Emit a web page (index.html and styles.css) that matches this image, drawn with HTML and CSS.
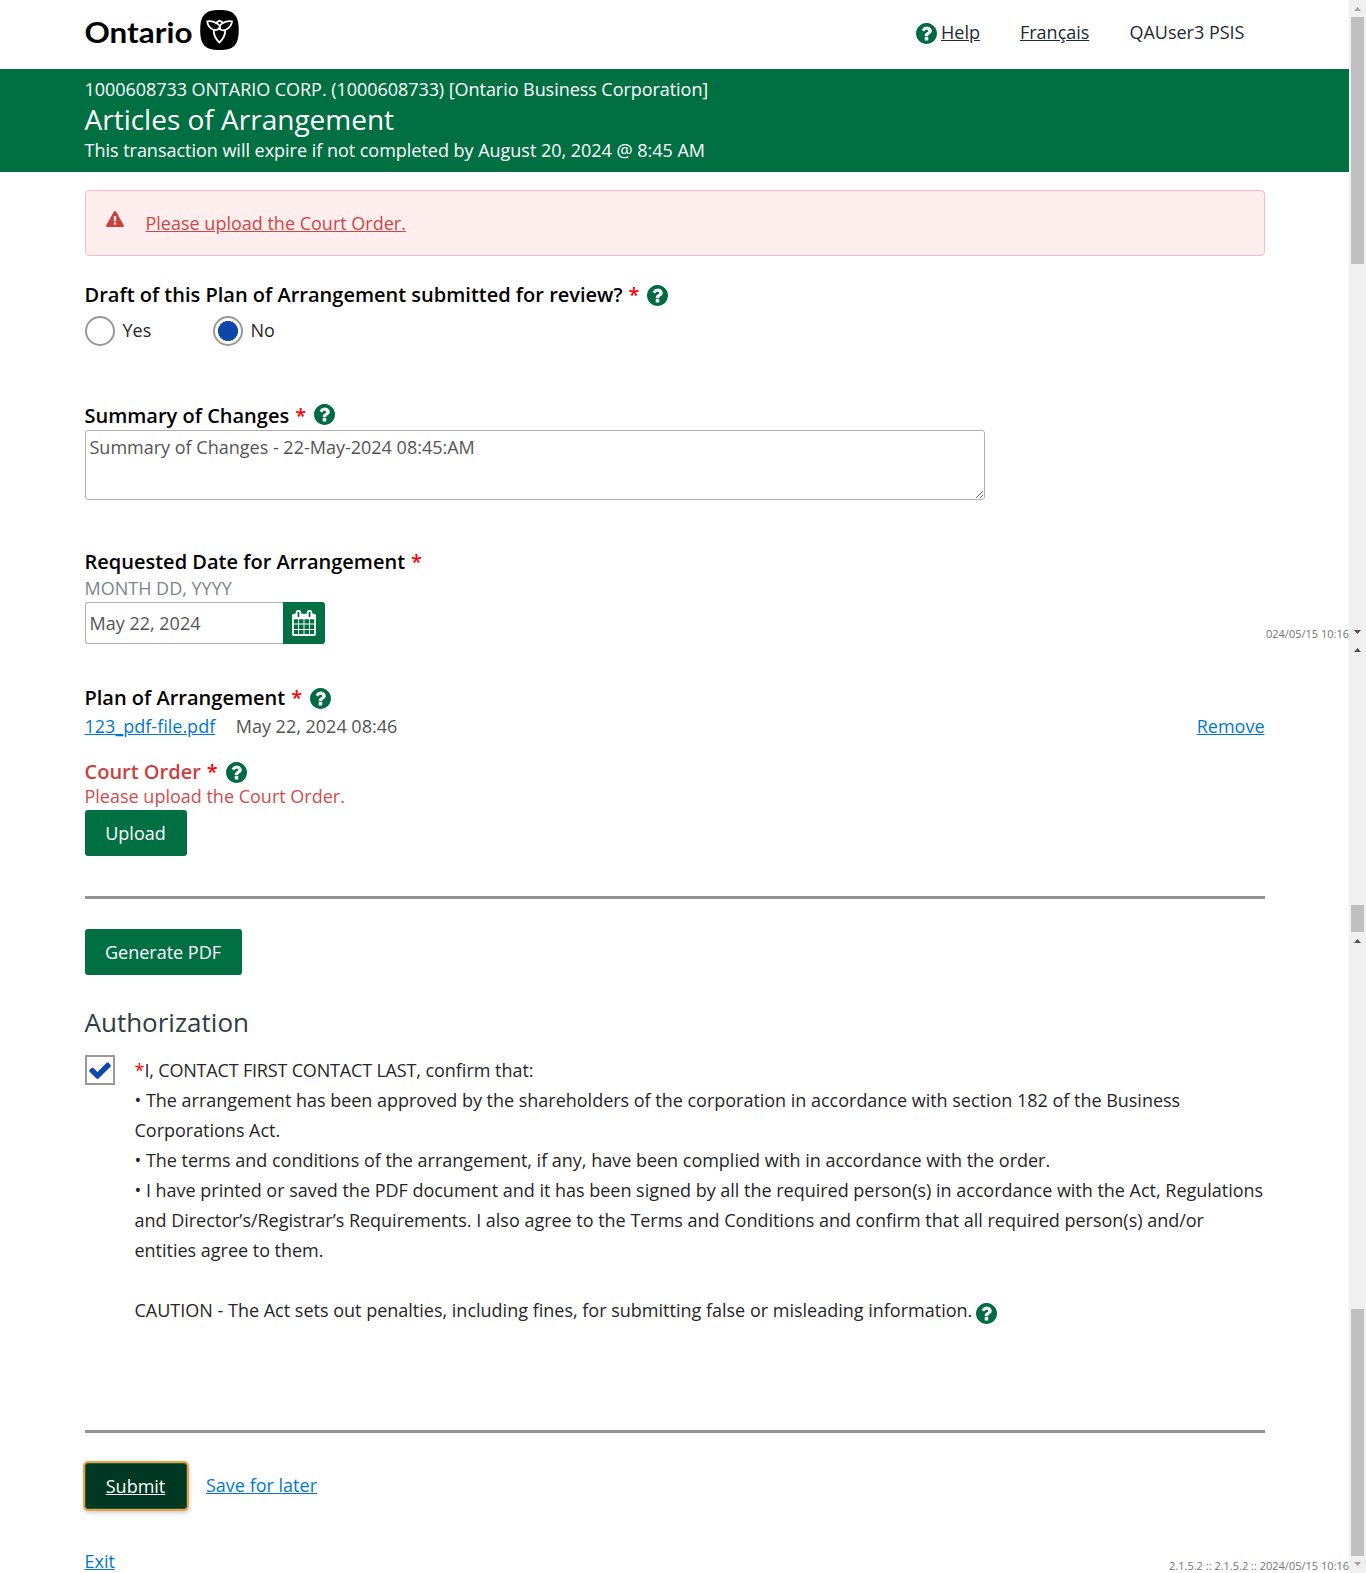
FILE: index.html
```html
<!DOCTYPE html>
<html lang="en">
<head>
<meta charset="utf-8">
<title>Articles of Arrangement</title>
<link rel="stylesheet" href="styles.css">
</head>
<body>
<svg class="sprite" aria-hidden="true">
  <symbol id="help" viewBox="128 128 1536 1536"><path d="M1024 1376v-192q0-14-9-23t-23-9h-192q-14 0-23 9t-9 23v192q0 14 9 23t23 9h192q14 0 23-9t9-23zm256-672q0-88-55.5-163t-138.5-116-170-41q-243 0-371 213-15 24 8 42l132 100q7 6 19 6 16 0 25-12 53-68 86-92 34-24 86-24 48 0 85.5 26t37.5 59q0 38-20 61t-68 45q-63 28-115.5 86.5t-52.5 125.5v36q0 14 9 23t23 9h192q14 0 23-9t9-23q0-19 21.5-49.5t54.5-49.5q32-18 49-28.5t46-35 44.5-48 28-60.5 12.5-81zm384 192q0 209-103 385.5t-279.5 279.5-385.5 103-385.5-103-279.5-279.5-103-385.5 103-385.5 279.5-279.5 385.5-103 385.5 103 279.5 279.5 103 385.5z"/></symbol>
</svg>
<div class="window">
  <div class="page">
    <header class="top">
      <svg class="logo" viewBox="0 0 156 42" role="img" aria-label="Ontario">
        <text class="wordmark" x="-0.500" y="33" textLength="108" lengthAdjust="spacingAndGlyphs">Ontario</text>
        <path d="M134.500 0C148.700 0 153.700 5 153.700 20s-5 20-19.200 20S115.200 35 115.200 20 120.300 0 134.500 0z"/>
        <g class="trillium">
          <path d="M122.200 11.300Q128 10.800 131 13 132.500 11.500 134.500 10.600 137 11.500 138 13 141 10.800 147 11.300 146.500 17 140.200 20 140.400 27 134.400 32.500 128.400 27 128.800 20 123 17.500 122.200 11.300z"/>
          <path d="M131 13Q135.500 15 135 18 132 20.500 128.800 20"/>
          <path d="M138 13Q133.500 15.500 134.500 19 137.500 21 140.200 20"/>
        </g>
      </svg>
      <nav class="links">
        <a class="help-link"><svg class="icon"><use href="#help"/></svg><span class="u">Help</span></a>
        <a class="u">Français</a>
        <span>QAUser3 PSIS</span>
      </nav>
    </header>

    <div class="band">
      <div class="entity">1000608733 ONTARIO CORP. (1000608733) [Ontario Business Corporation]</div>
      <h1>Articles of Arrangement</h1>
      <div class="expiry">This transaction will expire if not completed by August 20, 2024 @ 8:45 AM</div>
    </div>

    <main class="form">
      <div class="alert">
        <svg class="warn" viewBox="0 0 18 16"><path d="M9 0C9.500 0 9.900.3 10.200.8L17.600 14c.6 1.200.1 2-1 2H1.400c-1.100 0-1.600-.8-1-2L7.800.8C8.100.3 8.500 0 9 0z"/><path class="mark" d="M7.700 5.200h2.600L10 10.300H8zM7.900 11.500h2.200v2.200H7.900z"/></svg>
        <a class="u">Please upload the Court Order.</a>
      </div>

      <div class="label draft"><span>Draft of this Plan of Arrangement submitted for review?</span><b>*</b><svg class="icon"><use href="#help"/></svg></div>
      <div class="radios">
        <label class="radio"><i class="dot"></i><span>Yes</span></label>
        <label class="radio"><i class="dot on"></i><span>No</span></label>
      </div>

      <div class="label summary"><span>Summary of Changes</span><b>*</b><svg class="icon raised"><use href="#help"/></svg></div>
      <textarea class="area">Summary of Changes - 22-May-2024 08:45:AM</textarea>

      <div class="label requested"><span>Requested Date for Arrangement</span><b>*</b></div>
      <div class="hint">MONTH DD, YYYY</div>
      <div class="date">
        <div class="field">May 22, 2024</div>
        <div class="cal"><svg viewBox="64 0 1664 1792"><path d="M192 1664h288v-288h-288v288zm352 0h320v-288h-320v288zm-352-352h288v-320h-288v320zm352 0h320v-320h-320v320zm-352-384h288v-288h-288v288zm736 736h320v-288h-320v288zm-384-736h320v-288h-320v288zm768 736h288v-288h-288v288zm-384-352h320v-320h-320v320zm-352-864v-288q0-13-9.500-22.500t-22.500-9.500h-64q-13 0-22.500 9.500t-9.500 22.500v288q0 13 9.500 22.500t22.500 9.500h64q13 0 22.500-9.500t9.500-22.500zm736 864h288v-320h-288v320zm-384-384h320v-288h-320v288zm384 0h288v-288h-288v288zm32-480v-288q0-13-9.500-22.500t-22.500-9.500h-64q-13 0-22.500 9.500t-9.500 22.500v288q0 13 9.500 22.500t22.500 9.500h64q13 0 22.500-9.500t9.500-22.500zm384-64v1280q0 52-38 90t-90 38h-1408q-52 0-90-38t-38-90v-1280q0-52 38-90t90-38h128v-96q0-66 47-113t113-47h64q66 0 113 47t47 113v96h384v-96q0-66 47-113t113-47h64q66 0 113 47t47 113v96h128q52 0 90 38t38 90z"/></svg></div>
      </div>

      <div class="label plan"><span>Plan of Arrangement</span><b>*</b><svg class="icon"><use href="#help"/></svg></div>
      <div class="file"><a class="link">123_pdf-file.pdf</a><span>May 22, 2024 08:46</span><a class="link remove">Remove</a></div>

      <div class="label court"><span>Court Order</span><b>*</b><svg class="icon"><use href="#help"/></svg></div>
      <div class="error">Please upload the Court Order.</div>
      <div class="btn upload">Upload</div>

      <hr class="rule first">
      <div class="btn generate">Generate PDF</div>

      <h2>Authorization</h2>
      <div class="auth">
        <div class="check"><svg viewBox="121 300 1550 1222"><path d="M1671 566q0 40-28 68l-724 724-136 136q-28 28-68 28t-68-28l-136-136-362-362q-28-28-28-68t28-68l136-136q28-28 68-28t68 28l294 295 656-657q28-28 68-28t68 28l136 136q28 28 28 68z"/></svg></div>
        <div class="terms"><b>*</b><span class="signer">I, CONTACT FIRST CONTACT LAST,</span> confirm that:<br>
          • The arrangement has been approved by the shareholders of the corporation in accordance with section 182 of the Business<br>Corporations Act.<br>
          • The terms and conditions of the arrangement, if any, have been complied with in accordance with the order.<br>
          • I have printed or saved the PDF document and it has been signed by all the required person(s) in accordance with the Act, Regulations<br>and Director’s/Registrar’s Requirements. I also agree to the Terms and Conditions and confirm that all required person(s) and/or<br>entities agree to them.<br><br>
          <div class="caution">CAUTION - The Act sets out penalties, including fines, for submitting false or misleading information.<svg class="icon"><use href="#help"/></svg></div>
        </div>
      </div>

      <hr class="rule second">
      <div class="actions"><div class="btn submit">Submit</div><a class="link">Save for later</a></div>
      <div class="exit"><a class="link">Exit</a></div>
    </main>
    <div class="version mid">024/05/15 10:16</div>
    <div class="version end">2.1.5.2 :: 2.1.5.2 :: 2024/05/15 10:16</div>
  </div>

  <div class="scroll">
    <i class="arrow up dim"></i>
    <i class="thumb"></i>
    <i class="arrow down"></i>
    <i class="arrow up next"></i>
    <i class="thumb small"></i>
    <i class="arrow up last"></i>
    <i class="thumb low"></i>
    <i class="arrow down dim foot"></i>
  </div>
</div>
</body>
</html>
```
FILE: styles.css
```css
* { box-sizing: border-box; }
body { margin: 0; background: #fff; font: 400 18px/24px "Open Sans", sans-serif; color: #262626; }
h1, h2 { margin: 0; }
.sprite { position: absolute; width: 0; height: 0; }
.u { text-decoration: underline; }
.window { display: flex; height: 1573px; overflow: hidden; white-space: nowrap; }
.page { position: relative; flex: 1; min-width: 0; }
.icon { display: block; width: 21px; height: 21px; fill: #006b42; flex: none; }

.top { display: flex; justify-content: space-between; height: 69px; padding: 10px 104.5px 0 84.5px; }
.logo { width: 156px; height: 42px; overflow: visible; }
.wordmark { font: 700 29px "Lato", sans-serif; fill: #000; }
.trillium { fill: none; stroke: #fff; stroke-width: 1.8; stroke-linejoin: round; }
.links { display: flex; gap: 40px; padding-top: 10px; color: #1a2b34; }
.help-link { display: flex; gap: 4px; }
.help-link .icon { margin-top: 3px; }

.band { height: 103px; padding: 8px 84.5px 0; background: #006f42; color: #fff; }
.band h1 { font-size: 28px; font-weight: 400; line-height: 36px; }
.entity { letter-spacing: -0.05px; }
.expiry { margin-top: 1px; letter-spacing: -0.02px; }

.form { padding: 18px 84.5px 0; }
.alert { display: flex; height: 66px; padding: 20px; border: 1px solid #ffb8c6; border-radius: 4px; background: #ffeeee; color: #cf4646; gap: 22px; }
.warn { width: 18px; height: 16px; fill: #cc3f3f; }
.warn .mark { fill: #ffeeee; }

.label { display: flex; align-items: center; height: 26px; font-size: 20px; font-weight: 545; color: #000; line-height: 26px; }
.label span, .label b { padding-top: 1px; }
.label b { margin: 0 8px 0 6px; color: #f00; font-weight: 545; }
.label .icon { margin-top: 2px; }
.label .raised { margin-top: -2px; }
.draft { margin-top: 25px; }
.radios { display: flex; margin-top: 9px; }
.radio { display: flex; width: 128px; height: 30px; gap: 8px; line-height: 28px; }
.dot { width: 30px; height: 30px; border: 2px solid #999; border-radius: 50%; }
.dot.on { background: radial-gradient(circle, #0d47a7 9.7px, #fff 10.3px); }

.summary { margin-top: 56px; }
.area { display: block; width: 900px; height: 70px; margin: 2px 0 0; padding: 4px; border: 1px solid #b3b3b3; border-radius: 3px; color: #555; font: inherit; overflow: hidden; }
.requested { margin-top: 48px; }
.hint { margin-top: 2px; color: #7c868b; }
.date { display: flex; margin-top: 2px; }
.field { width: 198px; height: 42px; padding: 8px 4px; border: 1px solid #b3b3b3; border-right: 0; border-radius: 3px 0 0 3px; color: #555; }
.cal { display: flex; align-items: center; justify-content: center; width: 42px; height: 42px; border-radius: 0 3px 3px 0; background: #006f42; }
.cal svg { width: 24px; height: 26px; fill: #fff; }

.plan { margin-top: 40px; }
.file { display: flex; gap: 20.5px; margin-top: 4px; color: #555; }
.link { color: #0078d2; text-decoration: underline; }
.remove { margin-left: auto; }
.label.court { margin-top: 20px; color: #cc3f3f; }
.error { color: #d04d4d; }
.btn { width: 102px; height: 46px; border-radius: 3px; background: #006f42; color: #fff; line-height: 46px; text-align: center; }
.upload { margin-top: 2px; }
.rule { height: 3px; border: 0; background: #929292; }
.first { margin: 40px 0 30px; }
.generate { width: 157px; }

h2 { margin-top: 29px; font-size: 26px; font-weight: 400; line-height: 36px; color: #2d3c45; }
.auth { display: flex; gap: 20px; margin-top: 15px; }
.check { display: flex; align-items: center; justify-content: center; flex: none; width: 30px; height: 30px; border: 2px solid #999; }
.check svg { width: 22px; height: 17px; fill: #0d47a7; }
.terms { line-height: 30px; letter-spacing: -0.015px; }
.terms b { color: #f00; font-weight: 400; }
.signer { letter-spacing: -0.18px; }
.caution { display: flex; align-items: center; gap: 4px; height: 30px; letter-spacing: 0; }
.caution .icon { margin-top: 7px; }

.second { margin: 105px 0 30px; }
.actions { display: flex; gap: 19.5px; }
.submit { border: 1px solid #006b42; background: #003823; line-height: 45px; text-decoration: underline; box-shadow: 0 0 0 2px #ff9a3c, 1px 3px 4px 1px #0003; }
.actions .link { height: 46px; line-height: 44px; }
.exit { margin-top: 40px; }
.version { position: absolute; right: 0; font-size: 11px; line-height: 16px; color: #737373; }
.mid { top: 626px; }
.end { top: 1558px; }

.scroll { display: flex; flex: none; flex-direction: column; align-items: center; width: 17px; background: #f0f0f0; }
.thumb { width: 13px; height: 247px; margin-top: 6px; background: #c0c0c0; }
.arrow { width: 7px; height: 4px; background: #505050; }
.up { clip-path: polygon(50% 0, 100% 100%, 0 100%); }
.down { margin-top: 366px; clip-path: polygon(0 0, 100% 0, 50% 100%); }
.dim { margin-top: 7px; background: #a3a3a3; }
.next { margin-top: 14px; }
.small { height: 27px; margin-top: 253px; }
.last { margin-top: 7px; }
.low { margin-top: 366px; }
.foot { margin-top: 6px; }
```
